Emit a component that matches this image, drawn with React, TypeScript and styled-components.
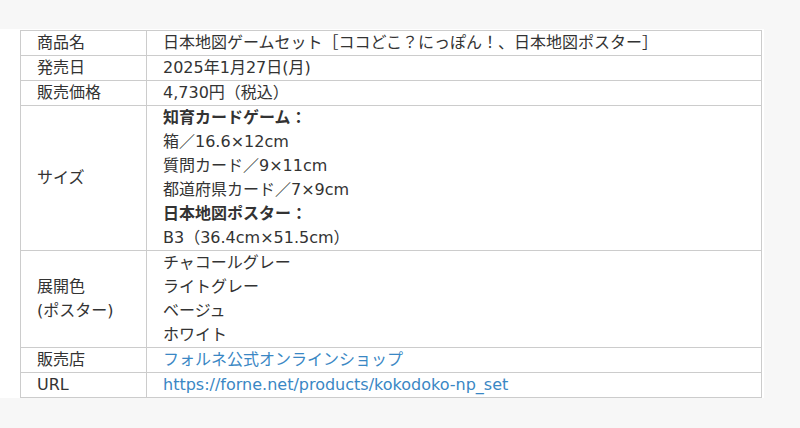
import * as React from "react"
import styled, { createGlobalStyle } from "styled-components"

const GlobalStyle = createGlobalStyle`
  body {
    margin: 0;
    background: #f7f7f7;
    font-family: "DejaVu Sans", "Noto Sans CJK JP", sans-serif;
    color: #333;
  }
`

const Page = styled.div`
  padding-top: 29px;
  height: 428px;
  box-sizing: border-box;
`

const Section = styled.section`
  width: 764px;
  padding: 1px 0 0 20px;
  box-sizing: border-box;
  background: #fff;
`

const Table = styled.table`
  width: 742px;
  border-collapse: collapse;
  font-size: 16px;
  line-height: 24px;
`

const Th = styled.th`
  width: 126px;
  padding: 0 0 0 16px;
  box-sizing: border-box;
  border: 1px solid #ccc;
  text-align: left;
  font-weight: normal;
  vertical-align: middle;
`

const Td = styled.td`
  padding: 0 0 0 16px;
  border: 1px solid #ccc;
  text-align: left;
`

const Line = styled.div<{ $bold?: boolean }>`
  font-weight: ${(p) => (p.$bold ? "bold" : "normal")};
`

const Link = styled.a`
  color: #3a87c4;
  text-decoration: none;
`

const rows: { label: React.ReactNode; value: React.ReactNode }[] = [
  {
    label: "商品名",
    value: "日本地図ゲームセット［ココどこ？にっぽん！、日本地図ポスター］",
  },
  { label: "発売日", value: "2025年1月27日(月)" },
  { label: "販売価格", value: "4,730円（税込）" },
  {
    label: "サイズ",
    value: (
      <>
        <Line $bold>知育カードゲーム：</Line>
        <Line>箱／16.6×12cm</Line>
        <Line>質問カード／9×11cm</Line>
        <Line>都道府県カード／7×9cm</Line>
        <Line $bold>日本地図ポスター：</Line>
        <Line>B3（36.4cm×51.5cm）</Line>
      </>
    ),
  },
  {
    label: (
      <>
        展開色
        <br />
        (ポスター)
      </>
    ),
    value: (
      <>
        <Line>チャコールグレー</Line>
        <Line>ライトグレー</Line>
        <Line>ベージュ</Line>
        <Line>ホワイト</Line>
      </>
    ),
  },
  {
    label: "販売店",
    value: <Link href="#">フォルネ公式オンラインショップ</Link>,
  },
  {
    label: "URL",
    value: <Link href="#">https://forne.net/products/kokodoko-np_set</Link>,
  },
]

const App = () => (
  <Page>
    <GlobalStyle />
    <Section>
      <Table>
        <tbody>
          {rows.map((r, i) => (
            <tr key={i}>
              <Th>{r.label}</Th>
              <Td>{r.value}</Td>
            </tr>
          ))}
        </tbody>
      </Table>
    </Section>
  </Page>
)

export default App
